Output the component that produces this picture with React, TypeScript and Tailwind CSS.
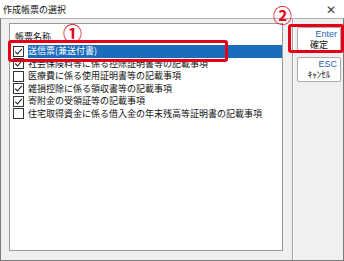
import React from "react";

const font = { fontFamily: '"Noto Sans CJK JP", "Noto Sans", sans-serif' };

function Check({ on }: { on: boolean }) {
  return (
    <div className="w-[11px] h-[11px] border border-[#333] bg-white flex items-center justify-center shrink-0">
      {on && (
        <svg width="9" height="9" viewBox="0 0 9 9">
          <path d="M1.2 4.6 L3.5 7 L7.8 1.8" fill="none" stroke="#222" strokeWidth="1.1" />
        </svg>
      )}
    </div>
  );
}

const rows = [
  { t: "送信票(兼送付書)", on: true, sel: true },
  { t: "社会保険料等に係る控除証明書等の記載事項", on: true },
  { t: "医療費に係る使用証明書等の記載事項", on: false },
  { t: "雑損控除に係る領収書等の記載事項", on: true },
  { t: "寄附金の受領証等の記載事項", on: true },
  { t: "住宅取得資金に係る借入金の年末残高等証明書の記載事項", on: false },
];

export default function App() {
  return (
    <div className="w-[344px] h-[261px] bg-white relative overflow-hidden text-[#111]" style={font}>
      <div className="h-[18px] flex items-center justify-between pl-[3px] pr-[8px] bg-white">
        <span className="text-[9px] leading-none">作成帳票の選択</span>
        <span className="text-[12px] leading-none text-[#444]">✕</span>
      </div>
      <div className="h-[243px] flex border-l border-r border-b border-t border-[#7a7a7a] border-t-[#b0b0b0] bg-[#f0f0f0]">
        <div className="w-[292px] border-r border-[#a0a0a0] pl-[8px] pt-[4px]">
          <div className="w-[274px] h-[228px] bg-white border border-[#9a9aa2] pl-[3px] pt-[7px]">
            <div className="text-[9px] leading-[12px] pl-[2px] h-[14px]">帳票名称</div>
            {rows.map((r, i) => (
              <div key={i} className="flex items-center h-[12.5px]">
                <Check on={r.on} />
                <div
                  className={
                    "ml-[4px] flex-1 h-[12.5px] text-[9px] leading-[12.5px] whitespace-nowrap " +
                    (r.sel ? "bg-[#1c6cbc] text-white" : "")
                  }
                >
                  {r.t}
                </div>
              </div>
            ))}
          </div>
        </div>
        <div className="flex-1 flex flex-col items-end pr-[2px] pt-[8px] gap-[6px] border-l border-white">
          <div className="w-[44px] h-[24px] border border-[#adadad] rounded-[2px] bg-white flex flex-col items-stretch px-[3px] pt-[1px]">
            <span className="text-[9px] leading-[11px] text-right text-[#1f5fb0]" style={{ fontFamily: '"Liberation Sans", sans-serif' }}>Enter</span>
            <span className="text-[9px] leading-[10px] text-center">確定</span>
          </div>
          <div className="w-[44px] h-[25px] border border-[#adadad] rounded-[2px] bg-white flex flex-col items-stretch px-[3px] pt-[1px]">
            <span className="text-[9px] leading-[11px] text-right text-[#1f5fb0]" style={{ fontFamily: '"Liberation Sans", sans-serif' }}>ESC</span>
            <span className="text-[9px] leading-[10px] text-center">ｷｬﾝｾﾙ</span>
          </div>
        </div>
      </div>
      {/* annotations */}
      <div className="absolute left-[8px] top-[40px] w-[220px] h-[22px] border-[3px] border-[#e5001a] rounded-[3px]" />
      <div className="absolute left-[63px] top-[23px] text-[19px] leading-none text-[#e5001a] font-bold">①</div>
      <div className="absolute left-[288px] top-[24px] w-[56px] h-[29px] border-[3px] border-[#e5001a] rounded-[3px]" />
      <div className="absolute left-[273px] top-[5px] text-[19px] leading-none text-[#e5001a] font-bold">②</div>
    </div>
  );
}
